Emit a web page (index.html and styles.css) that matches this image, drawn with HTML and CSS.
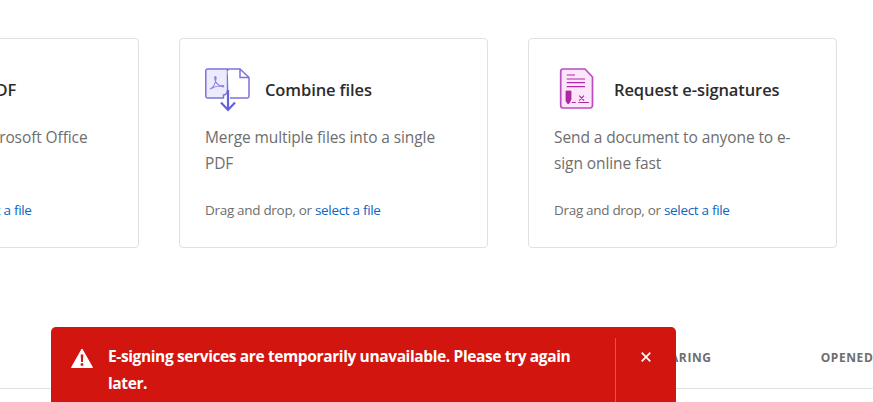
FILE: index.html
```html
<!DOCTYPE html>
<html lang="en">
<head>
<meta charset="utf-8">
<title>Acrobat tools</title>
<link rel="stylesheet" href="styles.css">
</head>
<body>
<main class="page">
  <section class="cards">
    <article class="card">
      <header class="card-head">
        <svg class="icon" viewBox="0 0 46 46"></svg>
        <h2 class="card-title">Export a PDF</h2>
      </header>
      <p class="card-desc">Convert PDFs to Microsoft Office formats and more</p>
      <p class="card-hint">Drag and drop, or <a class="link" href="#">select a file</a></p>
    </article>
    <article class="card">
      <header class="card-head">
        <svg class="icon" viewBox="0 0 46 46" fill="none">
          <path d="M2.500 3H22.500V24.500C22.500 27 20.500 29 18.500 29V32H2.500A1.700 1.700 0 0 1 .8 30.300V4.700A1.700 1.700 0 0 1 2.500 3z" fill="#ecebfb" stroke="#7b73dc" stroke-width="1.500"/>
          <path d="M25 32H42.300A1.700 1.700 0 0 0 44 30.300V11.500L35 3H24.500A2 2 0 0 0 22.500 5" fill="#fff" stroke="#7b73dc" stroke-width="1.500"/>
          <path d="M35 3v8.500H44" stroke="#7b73dc" stroke-width="1.500"/>
          <path d="M5 23c3-1 5.500-5.500 6-10.500.2-2.800-1.500-2.500-1.200 0 .5 4.500 3 7 7.500 8.200 2 .5 2-1.200 0-1.200-4 0-8.500 1.300-12.300 3.500z" stroke="#8a83e0" stroke-width="1.200"/>
          <path d="M23 24v20M16 36.500l7 7.500 7-7.500" stroke="#6560e0" stroke-width="2.200"/>
        </svg>
        <h2 class="card-title">Combine files</h2>
      </header>
      <p class="card-desc">Merge multiple files into a single PDF</p>
      <p class="card-hint">Drag and drop, or <a class="link" href="#">select a file</a></p>
    </article>
    <article class="card">
      <header class="card-head">
        <svg class="icon" viewBox="0 0 46 46" fill="none">
          <path d="M9 3h22L38.500 11V39.500A2.500 2.500 0 0 1 36 42H9A2.500 2.500 0 0 1 6.700 39.500V5.500A2.500 2.500 0 0 1 9 3z" fill="#fbe6fb" stroke="#b94cc0" stroke-width="1.700"/>
          <path d="M12.700 9H21M12.700 13H31M12.700 16.700H31M12.700 20.700H31" stroke="#b0279f" stroke-width="1.200"/>
          <path d="M12 25h5v8.500L15 37.500h-1.500L12 35z" fill="#b0279f" stroke="#b0279f" stroke-width=".8"/>
          <path d="M17.700 36.500h4M24.300 36.500H35M25.200 29.700l4.800 5M30 29.700l-4.800 5" stroke="#b0279f" stroke-width="1.200"/>
        </svg>
        <h2 class="card-title">Request e-signatures</h2>
      </header>
      <p class="card-desc">Send a document to anyone to e-sign online fast</p>
      <p class="card-hint">Drag and drop, or <a class="link" href="#">select a file</a></p>
    </article>
  </section>

  <nav class="tabs">
    <span class="tab">SHARING</span>
    <span class="tab">OPENED</span>
  </nav>

  <aside class="toast" role="alert">
    <svg class="toast-icon" viewBox="0 0 22 20">
      <path d="M11 1 21.500 19.500H.5z" fill="#fff" stroke="#fff" stroke-linejoin="round"/>
      <path d="M9.700 6.500h2.600l-.4 7.500h-1.800zM9.700 15.200h2.600v2.500H9.700z" fill="#d31510"/>
    </svg>
    <p class="toast-text">E-signing services are temporarily unavailable. Please try again later.</p>
    <div class="toast-action">
      <svg class="toast-close" viewBox="0 0 10 10">
        <path d="M.7.700l8.600 8.600M9.300.700.7 9.300" stroke="#fff" stroke-width="1.700"/>
      </svg>
    </div>
  </aside>
</main>
</body>
</html>
```

FILE: styles.css
```css
* { box-sizing: border-box; }
html, body { margin: 0; height: 100%; background: #fff; overflow: hidden; }
body { font-family: "Open Sans", "Lato", sans-serif; color: #6e6e6e; }
.page { position: relative; height: 402px; overflow: hidden; padding-top: 38px; }
.cards { display: flex; gap: 40px; margin-left: -170px; }
.card {
  flex: 0 0 309px;
  height: 210px;
  border: 1px solid #e1e1e1;
  border-radius: 4px;
  padding: 27px 25px 0;
}
.card-head { display: flex; align-items: center; gap: 14px; height: 46px; margin-bottom: 12px; }
.icon { flex: 0 0 46px; width: 46px; height: 46px; }
.card-title { margin: 2px 0 0; font-size: 16.5px; font-weight: 600; letter-spacing: -.1px; color: #2c2c2c; line-height: 24px; }
.card-desc { margin: 1px 0 0; font-size: 15.5px; letter-spacing: -.1px; line-height: 26px; height: 52px; color: #6e6e6e; }
.card-hint { margin: 24px 0 0; font-size: 13.500px; letter-spacing: -.31px; line-height: 20px; color: #6e6e6e; }
.link { color: #0d66c2; text-decoration: none; }
.tabs {
  display: flex;
  gap: 109px;
  margin-top: 93px;
  height: 48px;
  padding: 9px 0 0 653px;
  border-bottom: 1px solid #e1e1e1;
  width: 1000px;
}
.tab { font-size: 12px; font-weight: 700; letter-spacing: .6px; line-height: 16px; color: #6e6e6e; }
.toast {
  position: absolute;
  left: 51px;
  top: 327px;
  width: 625px;
  height: 100px;
  display: flex;
  background: #d31510;
  border-radius: 5px;
  padding-top: 11px;
  color: #fff;
}
.toast-icon { width: 22px; height: 20px; margin: 10px 15px 0 20px; flex: none; }
.toast-text { margin: 5px 0 0; width: 507px; padding-right: 24px; flex: none; font-size: 15.500px; font-weight: 700; letter-spacing: -.38px; line-height: 27px; }
.toast-action {
  flex: 1;
  border-left: 1px solid #e2534f;
  display: flex;
  justify-content: center;
  padding-top: 14px;
}
.toast-close { width: 10px; height: 10px; flex: none; }
```
